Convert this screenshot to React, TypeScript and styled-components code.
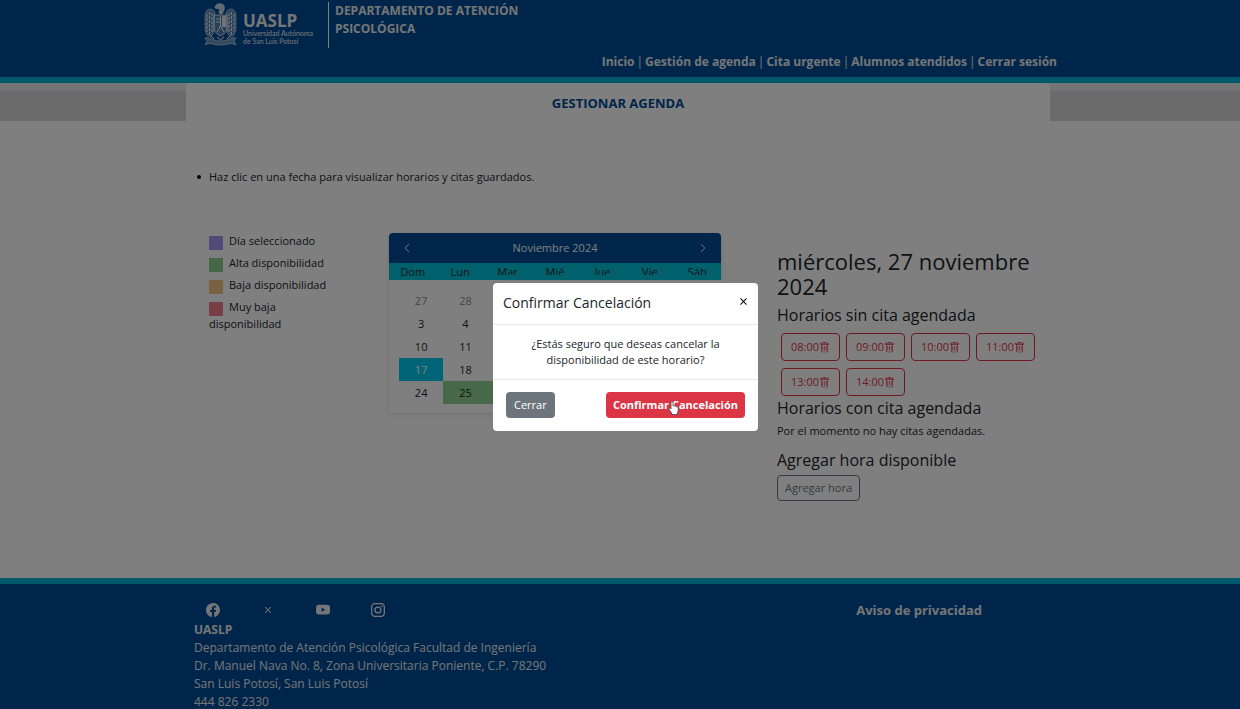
import React from "react";
import styled, { createGlobalStyle } from "styled-components";
import {
  BsChevronLeft,
  BsChevronRight,
  BsFacebook,
  BsInstagram,
  BsTrash,
  BsX,
  BsYoutube,
} from "react-icons/bs";

const color = {
  navy: "#004b94",
  teal: "#00b2d6",
  weekdays: "#00c0d8",
  ink: "#212529",
  danger: "#dc3545",
  green: "#8fd193",
};

const GlobalStyle = createGlobalStyle`
  *, *::before, *::after { box-sizing: border-box; }
  html, body { margin: 0; }
  body {
    overflow: hidden;
    background: #fff;
    color: ${color.ink};
    font: 12px/16px "Open Sans", "Noto Sans", sans-serif;
  }
  h1, h2, h3, p, ul { margin: 0; padding: 0; font-weight: 400; }
  button { font: inherit; cursor: pointer; }
  a { color: inherit; text-decoration: none; }
`;

const Page = styled.div`
  display: flex;
  flex-direction: column;
  min-height: 100vh;
`;

/* ---------- header ---------- */

const Header = styled.header`
  display: flex;
  justify-content: center;
  background: ${color.navy};
  border-bottom: 6px solid ${color.teal};
  color: #e8ecf0;
`;

const HeaderInner = styled.div`
  flex: 0 1 874px;
  display: flex;
  flex-direction: column;
  height: 77px;
  padding: 2px 0 0 20px;
`;

const Brand = styled.div`
  display: flex;
  align-items: flex-start;
`;

const Logo = styled.a`
  display: flex;
  gap: 5px;
  width: 126px;
  height: 46px;
  border-right: 1px solid #fff;
`;

const LogoText = styled.span`
  display: flex;
  flex-direction: column;
  padding-top: 10px;
  font: 7px/8px Lato, sans-serif;
  white-space: nowrap;

  strong {
    font: 700 17px/17px "Open Sans", sans-serif;
  }
`;

const Department = styled.p`
  width: 206px;
  padding-left: 6px;
  font-size: 12px;
  line-height: 18px;
  font-weight: 700;
`;

const Nav = styled.nav`
  display: flex;
  justify-content: flex-end;
  gap: 2px;
  padding-top: 4px;
  line-height: 20px;

  a { font-weight: 700; }
`;

/* ---------- page heading ---------- */

const TitleBand = styled.div`
  display: flex;
  justify-content: center;
  height: 38px;
  padding-right: 4px;
  background: linear-gradient(#eaeaf0 0 7px, #d6d6d6 9px 100%);
`;

const TitleTab = styled.div`
  flex: 0 1 864px;
  border-radius: 4px 4px 0 0;
  background: #fff;
  text-align: center;
`;

const Title = styled.h1`
  padding-top: 11px;
  color: ${color.navy};
  font-size: 13px;
  line-height: 18px;
  font-weight: 700;
`;

/* ---------- main ---------- */

const Main = styled.main`
  width: 100%;
  max-width: 868px;
  min-height: 457px;
  margin: 0 auto;
  padding: 47px 0 0 23px;
`;

const Hints = styled.ul`
  margin-left: -12px;
  font-size: 11px;
  line-height: 18px;
  list-style: none;

  li {
    display: flex;
    align-items: center;
  }

  li::before {
    content: "";
    width: 4px;
    height: 4px;
    margin-right: 8px;
    border-radius: 50%;
    background: #000;
  }
`;

const Columns = styled.div`
  display: flex;
  align-items: flex-start;
  padding-top: 47px;
`;

const Legend = styled.div`
  flex: 0 0 120px;
  margin-right: 60px;
`;

const LegendItem = styled.p`
  margin-bottom: 5px;
  font-size: 11px;
  line-height: 16px;
`;

const Swatch = styled.span<{ $fill: string }>`
  display: inline-block;
  width: 14px;
  height: 14px;
  margin-right: 6px;
  vertical-align: -5px;
  background: ${(p) => p.$fill};
`;

const Calendar = styled.section`
  flex: 0 0 332px;
  height: 180px;
  border-radius: 4px;
  box-shadow: 0 2px 6px rgba(0, 0, 0, 0.12);
`;

const MonthBar = styled.div`
  display: flex;
  align-items: center;
  justify-content: space-between;
  height: 30px;
  padding: 0 13px;
  border-radius: 4px 4px 0 0;
  background: ${color.navy};
  color: #fff;
  font-size: 11px;
`;

const MonthButton = styled.button`
  display: flex;
  padding: 0;
  border: 0;
  background: none;
  color: inherit;
`;

const Weekdays = styled.div`
  display: grid;
  grid-template-columns: repeat(7, 1fr);
  height: 17px;
  background: ${color.weekdays};
  font-size: 11px;
  line-height: 18px;
  text-align: center;
`;

const Weekday = styled.span<{ $cut: boolean }>`
  height: ${(p) => (p.$cut ? 12 : 17)}px;
  overflow: hidden;
`;

const Days = styled.table`
  width: 310px;
  margin: 9px 0 0 10px;
  border-collapse: collapse;
  table-layout: fixed;
`;

const Day = styled.td<{ $kind?: string }>`
  height: 23px;
  padding: 0;
  font-size: 11px;
  text-align: center;
  color: ${(p) =>
    p.$kind === "out" ? "#8a8a8a" : p.$kind === "today" ? "#fff" : color.ink};
  background: ${(p) =>
    p.$kind === "today" ? "#00c8ee" : p.$kind === "high" ? color.green : "none"};
`;

const Schedule = styled.section`
  flex: 0 1 270px;
  margin-left: 56px;
  padding-top: 16px;
`;

const DateHeading = styled.h2`
  margin-bottom: 6px;
  font-size: 22px;
  line-height: 25px;
`;

const SubHeading = styled.h3`
  font-size: 16px;
  line-height: 20px;
`;

const Slots = styled.div`
  display: flex;
  flex-wrap: wrap;
  gap: 7px 6px;
  padding: 8px 0 2px 4px;
`;

const Slot = styled.button`
  display: flex;
  align-items: center;
  justify-content: center;
  width: 59px;
  height: 28px;
  padding: 0;
  border: 1px solid ${color.danger};
  border-radius: 4px;
  background: none;
  color: ${color.danger};
  font-size: 11px;
`;

const Note = styled.p`
  padding: 5px 0 11px;
  font-size: 11px;
  line-height: 16px;
`;

const AddButton = styled.button`
  height: 26px;
  margin-top: 5px;
  padding: 0 7px;
  border: 1px solid #6c757d;
  border-radius: 4px;
  background: none;
  color: #6c757d;
  font-size: 11px;
`;

/* ---------- footer ---------- */

const Footer = styled.footer`
  flex: 1 0 auto;
  background: ${color.navy};
  border-top: 6px solid ${color.teal};
  color: #e8ecf0;
`;

const FooterInner = styled.div`
  display: flex;
  justify-content: space-between;
  max-width: 868px;
  margin: 0 auto;
  padding: 17px 72px 0 8px;
  line-height: 18px;
`;

const Social = styled.div`
  display: grid;
  grid-template-columns: repeat(4, 55px);
  height: 20px;
  padding-top: 2px;

  a {
    display: flex;
    width: 26px;
    height: 14px;
    padding-left: 12px;
  }
`;

const Contact = styled.address`
  font-style: normal;
`;

const Privacy = styled.a`
  font-size: 13px;
  font-weight: 700;
`;

/* ---------- modal ---------- */

const Backdrop = styled.div`
  position: fixed;
  inset: 0;
  display: flex;
  align-items: center;
  justify-content: center;
  padding: 5px 0 0 11px;
  background: rgba(0, 0, 0, 0.5);
`;

const Dialog = styled.div`
  width: 265px;
  border-radius: 4px;
  background: #fff;
`;

const DialogHeader = styled.div`
  display: flex;
  justify-content: space-between;
  align-items: flex-start;
  height: 42px;
  padding: 10px 7px 0 10px;
  border-bottom: 1px solid #e3e6ea;
`;

const DialogTitle = styled.h2`
  font-size: 14px;
  line-height: 20px;
`;

const CloseButton = styled.button`
  display: flex;
  padding: 1px 0;
  border: 0;
  background: none;
  color: #000;
`;

const DialogBody = styled.p`
  padding: 11px 36px;
  font-size: 11px;
  line-height: 16px;
  text-align: center;
`;

const DialogFooter = styled.div`
  display: flex;
  justify-content: space-between;
  padding: 12px 13px 13px;
  border-top: 1px solid #e3e6ea;
`;

const DialogButton = styled.button<{ $danger?: boolean }>`
  position: relative;
  height: 26px;
  padding: 0 ${(p) => (p.$danger ? 7 : 8)}px;
  border: 0;
  border-radius: 4px;
  background: ${(p) => (p.$danger ? color.danger : "#6c757d")};
  color: #fff;
  font-size: 11px;
  font-weight: ${(p) => (p.$danger ? 700 : 400)};
`;

const Pointer = styled.svg`
  position: absolute;
  left: 62px;
  top: 9px;
`;

const Emblem = () => (
  <svg width="35" height="44" viewBox="0 0 35 44" fill="none" stroke="#fff" aria-hidden="true">
    <path d="M12 5c1-3 4-4 6-3 3 0 4 3 3 6l-2 4-3-1 1-4-5-1z" fill="#fff" fillOpacity=".75" strokeWidth=".6" />
    <path d="M12 10C7 4 2 8 2 14v14l2 5 4 2 3-5V17zM23 10c5-6 10-2 10 4v14l-2 5-4 2-3-5V17z" fill="#fff" fillOpacity=".35" strokeWidth=".5" />
    <path d="M4 12v18M6.500 10v23M9 11v20M31 12v18M28.500 10v23M26 11v20" strokeWidth=".9" strokeDasharray="3 1" />
    <path d="M11 13h13v13c0 4-3 6-6.500 8C14 32 11 30 11 26z" fill="#fff" fillOpacity=".3" strokeWidth=".8" />
    <path d="M19 14h4v11h-4z" fill="#fff" fillOpacity=".8" stroke="none" />
    <path d="M13 17h4M13 20h4M17.500 14v11M14 30l3.500-6 3.500 6" strokeWidth=".9" />
    <path d="M2 36c4-2 7 3 15.500 3S29 34 33 36l-2 3 2 4c-5-3-9 0-15.500 0S7 40 2 43l2-4z" fill="#fff" fillOpacity=".4" strokeWidth=".5" />
    <path d="M8 34l3 3M27 34l-3 3M14 35l3.500 3 3.500-3" strokeWidth="1" />
  </svg>
);

const legend = [
  { label: "Día seleccionado", fill: "#a595ec" },
  { label: "Alta disponibilidad", fill: "#8ccc90" },
  { label: "Baja disponibilidad", fill: "#f0c480" },
  { label: "Muy baja disponibilidad", fill: "#f07c90" },
];

const weekdays = ["Dom", "Lun", "Mar", "Mié", "Jue", "Vie", "Sáb"];

const weeks = [
  [27, 28, 29, 30, 31, 1, 2],
  [3, 4, 5, 6, 7, 8, 9],
  [10, 11, 12, 13, 14, 15, 16],
  [17, 18, 19, 20, 21, 22, 23],
  [24, 25, 26, 27, 28, 29, 30],
];

const kindOf = (week: number, day: number) => {
  if (week === 0 && day > 20) return "out";
  if (day === 17) return "today";
  if (week === 4 && (day === 25 || day === 26)) return "high";
  return undefined;
};

const slots = ["08:00", "09:00", "10:00", "11:00", "13:00", "14:00"];

const links = ["Inicio", "Gestión de agenda", "Cita urgente", "Alumnos atendidos", "Cerrar sesión"];

export default function App() {
  return (
    <>
      <GlobalStyle />
      <Page>
        <Header>
          <HeaderInner>
            <Brand>
              <Logo href="#inicio">
                <Emblem />
                <LogoText>
                  <strong>UASLP</strong>
                  <span>Universidad Autónoma</span>
                  <span>de San Luis Potosí</span>
                </LogoText>
              </Logo>
              <Department>DEPARTAMENTO DE ATENCIÓN PSICOLÓGICA</Department>
            </Brand>
            <Nav>
              {links.map((text, i) => (
                <React.Fragment key={text}>
                  {i > 0 && <span>|</span>}
                  <a href="#menu">{text}</a>
                </React.Fragment>
              ))}
            </Nav>
          </HeaderInner>
        </Header>

        <TitleBand>
          <TitleTab>
            <Title>GESTIONAR AGENDA</Title>
          </TitleTab>
        </TitleBand>

        <Main>
          <Hints>
            <li>Haz clic en una fecha para visualizar horarios y citas guardados.</li>
          </Hints>
          <Columns>
            <Legend>
              {legend.map((item) => (
                <LegendItem key={item.label}>
                  <Swatch $fill={item.fill} />
                  {item.label}
                </LegendItem>
              ))}
            </Legend>

            <Calendar>
              <MonthBar>
                <MonthButton aria-label="Mes anterior"><BsChevronLeft size={10} /></MonthButton>
                <span>Noviembre 2024</span>
                <MonthButton aria-label="Mes siguiente"><BsChevronRight size={10} /></MonthButton>
              </MonthBar>
              <Weekdays>
                {weekdays.map((name, i) => (
                  <Weekday key={name} $cut={i > 1}>{name}</Weekday>
                ))}
              </Weekdays>
              <Days>
                <tbody>
                  {weeks.map((week, w) => (
                    <tr key={w}>
                      {week.map((day) => (
                        <Day key={day} $kind={kindOf(w, day)}>{day}</Day>
                      ))}
                    </tr>
                  ))}
                </tbody>
              </Days>
            </Calendar>

            <Schedule>
              <DateHeading>miércoles, 27 noviembre 2024</DateHeading>
              <SubHeading>Horarios sin cita agendada</SubHeading>
              <Slots>
                {slots.map((time) => (
                  <Slot key={time}>
                    {time}
                    <BsTrash size={11} />
                  </Slot>
                ))}
              </Slots>
              <SubHeading>Horarios con cita agendada</SubHeading>
              <Note>Por el momento no hay citas agendadas.</Note>
              <SubHeading>Agregar hora disponible</SubHeading>
              <AddButton>Agregar hora</AddButton>
            </Schedule>
          </Columns>
        </Main>

        <Footer>
          <FooterInner>
            <div>
              <Social>
                <a href="#facebook" aria-label="Facebook"><BsFacebook size={14} /></a>
                <a href="#x" aria-label="X"><BsX size={14} /></a>
                <a href="#youtube" aria-label="YouTube"><BsYoutube size={14} /></a>
                <a href="#instagram" aria-label="Instagram"><BsInstagram size={14} /></a>
              </Social>
              <Contact>
                <strong>UASLP</strong>
                <p>Departamento de Atención Psicológica Facultad de Ingeniería</p>
                <p>Dr. Manuel Nava No. 8, Zona Universitaria Poniente, C.P. 78290</p>
                <p>San Luis Potosí, San Luis Potosí</p>
                <p>444 826 2330</p>
              </Contact>
            </div>
            <Privacy href="#privacidad">Aviso de privacidad</Privacy>
          </FooterInner>
        </Footer>
      </Page>

      <Backdrop>
        <Dialog role="dialog" aria-modal="true" aria-labelledby="dialog-title">
          <DialogHeader>
            <DialogTitle id="dialog-title">Confirmar Cancelación</DialogTitle>
            <CloseButton aria-label="Cerrar ventana"><BsX size={15} /></CloseButton>
          </DialogHeader>
          <DialogBody>¿Estás seguro que deseas cancelar la disponibilidad de este horario?</DialogBody>
          <DialogFooter>
            <DialogButton>Cerrar</DialogButton>
            <DialogButton $danger>
              Confirmar Cancelación
              <Pointer width="11" height="14" viewBox="0 0 11 14" aria-hidden="true">
                <path
                  d="M3 1.500c0-1.300 2-1.300 2 0V5c.5-.6 1.700-.5 1.900.3.600-.5 1.600-.2 1.700.6.800-.3 1.600.2 1.600 1.100v2.500c0 1-.7 1.500-.9 2.500v1.500H3.700V12C2.800 11 1.800 9.500 1 8c-.5-1 .7-1.600 1.300-.9l.7.900z"
                  fill="#fff"
                  stroke="#333"
                  strokeWidth=".7"
                />
              </Pointer>
            </DialogButton>
          </DialogFooter>
        </Dialog>
      </Backdrop>
    </>
  );
}
